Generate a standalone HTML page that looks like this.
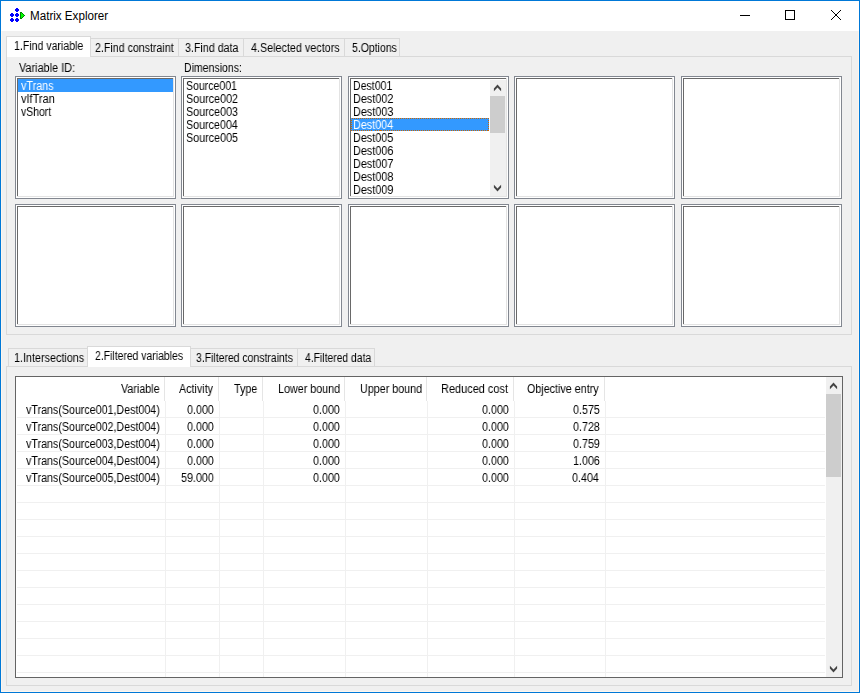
<!DOCTYPE html>
<html><head><meta charset="utf-8"><title>Matrix Explorer</title>
<style>
html,body{margin:0;padding:0;background:#f0f0f0;}
body{width:860px;height:693px;overflow:hidden;position:relative;font-family:"Liberation Sans",sans-serif;color:#000;}
#win{position:absolute;left:0;top:0;width:858px;height:691px;border:1px solid #0078d7;background:#f0f0f0;box-shadow:inset 0 0 0 1px #fdf6ee;}
#title{position:absolute;left:1px;top:1px;width:858px;height:30px;background:#fff;}
.abs{position:absolute;}
.t{position:absolute;white-space:nowrap;font-size:12px;line-height:14px;transform-origin:0 0;will-change:transform;}
.ttl{will-change:auto;text-shadow:none;}
.page{position:absolute;border:1px solid #d9d9d9;background:#f0f0f0;box-sizing:border-box;}
.tab{position:absolute;box-sizing:border-box;border:1px solid #d9d9d9;border-bottom:none;background:#f0f0f0;}
.tab.sel{background:#fff;}
.lb{position:absolute;box-sizing:border-box;width:161px;height:123px;border:1px solid #828790;background:#fff;}
.lb i{position:absolute;left:1px;top:1px;right:1px;bottom:1px;box-shadow:inset -1px -1px 0 #e3e3e3, inset 1px 1px 0 #696969;}
.hl{position:absolute;background:#3399ff;}
.vs{position:absolute;width:1px;background:#e5e5e5;}
.vg{position:absolute;width:1px;background:#f0f0f0;}
.hg{position:absolute;height:1px;background:#f0f0f0;}
</style></head><body>
<div id="win"></div>
<div id="title"></div>

<svg class="abs" style="left:9px;top:7px" width="17" height="16" viewBox="9 7 17 16">
<g fill="#0000ff" shape-rendering="crispEdges"><rect x="16" y="8" width="2" height="4"/><rect x="15" y="9" width="4" height="2"/><rect x="11" y="13" width="2" height="4"/><rect x="10" y="14" width="4" height="2"/><rect x="16" y="13" width="2" height="4"/><rect x="15" y="14" width="4" height="2"/><rect x="11" y="18" width="2" height="4"/><rect x="10" y="19" width="4" height="2"/><rect x="16" y="18" width="2" height="4"/><rect x="15" y="19" width="4" height="2"/></g>
<g shape-rendering="crispEdges"><g fill="#008000"><rect x="20" y="12" width="1" height="7"/><rect x="21" y="12" width="1" height="1"/><rect x="22" y="13" width="1" height="1"/><rect x="23" y="14" width="1" height="1"/><rect x="24" y="15" width="1" height="1"/><rect x="23" y="16" width="1" height="1"/><rect x="22" y="17" width="1" height="1"/><rect x="21" y="18" width="1" height="1"/></g><g fill="#00ff00"><rect x="21" y="13" width="1" height="5"/><rect x="22" y="14" width="1" height="3"/><rect x="23" y="15" width="1" height="1"/></g></g>
</svg>
<span class="t ttl" style="left:30.03px;top:9px;transform:scaleX(0.9686);">Matrix Explorer</span>
<svg class="abs" style="left:735px;top:5px" width="115" height="20" viewBox="735 5 115 20">
<g stroke="#000" stroke-width="1" fill="none" shape-rendering="crispEdges">
<line x1="740" y1="15.5" x2="750" y2="15.5"/>
<rect x="785.5" y="10.5" width="9" height="9"/>
</g>
<g fill="#000" shape-rendering="crispEdges"><rect x="831" y="10" width="1" height="1"/><rect x="840" y="10" width="1" height="1"/><rect x="832" y="11" width="1" height="1"/><rect x="839" y="11" width="1" height="1"/><rect x="833" y="12" width="1" height="1"/><rect x="838" y="12" width="1" height="1"/><rect x="834" y="13" width="1" height="1"/><rect x="837" y="13" width="1" height="1"/><rect x="835" y="14" width="1" height="1"/><rect x="836" y="14" width="1" height="1"/><rect x="836" y="15" width="1" height="1"/><rect x="835" y="15" width="1" height="1"/><rect x="837" y="16" width="1" height="1"/><rect x="834" y="16" width="1" height="1"/><rect x="838" y="17" width="1" height="1"/><rect x="833" y="17" width="1" height="1"/><rect x="839" y="18" width="1" height="1"/><rect x="832" y="18" width="1" height="1"/><rect x="840" y="19" width="1" height="1"/><rect x="831" y="19" width="1" height="1"/></g></svg>
<div class="page" style="left:6px;top:56px;width:846px;height:279px;"></div>
<div class="tab" style="left:90px;top:38px;width:89px;height:18px;"></div>
<span class="t" style="left:95.45px;top:41px;transform:scaleX(0.8864);">2.Find constraint</span>
<div class="tab" style="left:178px;top:38px;width:66px;height:18px;"></div>
<span class="t" style="left:184.55px;top:41px;transform:scaleX(0.8908);">3.Find data</span>
<div class="tab" style="left:243px;top:38px;width:102px;height:18px;"></div>
<span class="t" style="left:250.78px;top:41px;transform:scaleX(0.8980);">4.Selected vectors</span>
<div class="tab" style="left:344px;top:38px;width:56px;height:18px;"></div>
<span class="t" style="left:351.56px;top:41px;transform:scaleX(0.8734);">5.Options</span>
<div class="tab sel" style="left:6px;top:36px;width:85px;height:21px;"></div>
<span class="t" style="left:14.23px;top:39px;transform:scaleX(0.8803);">1.Find variable</span>
<span class="t" style="left:18.89px;top:61px;transform:scaleX(0.9072);">Variable ID:</span>
<span class="t" style="left:184.12px;top:61px;transform:scaleX(0.8767);">Dimensions:</span>
<div class="lb" style="left:15px;top:76px;"><i></i></div>
<div class="lb" style="left:181px;top:76px;"><i></i></div>
<div class="lb" style="left:348px;top:76px;"><i></i></div>
<div class="lb" style="left:514px;top:76px;"><i></i></div>
<div class="lb" style="left:681px;top:76px;"><i></i></div>
<div class="lb" style="left:15px;top:204px;"><i></i></div>
<div class="lb" style="left:181px;top:204px;"><i></i></div>
<div class="lb" style="left:348px;top:204px;"><i></i></div>
<div class="lb" style="left:514px;top:204px;"><i></i></div>
<div class="lb" style="left:681px;top:204px;"><i></i></div>
<div class="hl" style="left:18px;top:79px;width:155px;height:13px;"></div>
<span class="t" style="left:20.89px;top:79px;transform:scaleX(0.8982);color:#fff;">vTrans</span>
<span class="t" style="left:20.89px;top:92px;transform:scaleX(0.9167);">vIfTran</span>
<span class="t" style="left:20.89px;top:105px;transform:scaleX(0.8696);">vShort</span>
<span class="t" style="left:186.45px;top:79px;transform:scaleX(0.8791);">Source001</span>
<span class="t" style="left:186.44px;top:92px;transform:scaleX(0.8967);">Source002</span>
<span class="t" style="left:186.44px;top:105px;transform:scaleX(0.8967);">Source003</span>
<span class="t" style="left:186.44px;top:118px;transform:scaleX(0.8928);">Source004</span>
<span class="t" style="left:186.44px;top:131px;transform:scaleX(0.8967);">Source005</span>
<div class="hl" style="left:351px;top:118px;width:138px;height:13px;"></div>
<svg class="abs" style="left:351px;top:118px" width="138" height="13"><rect x="0.5" y="0.5" width="137" height="12" fill="none" stroke="#cc6600" stroke-width="1" stroke-dasharray="1 1" shape-rendering="crispEdges"/></svg>
<span class="t" style="left:353.12px;top:79px;transform:scaleX(0.8812);">Dest001</span>
<span class="t" style="left:353.10px;top:92px;transform:scaleX(0.9043);">Dest002</span>
<span class="t" style="left:353.10px;top:105px;transform:scaleX(0.9043);">Dest003</span>
<span class="t" style="left:353.10px;top:118px;transform:scaleX(0.8991);color:#fff;">Dest004</span>
<span class="t" style="left:353.10px;top:131px;transform:scaleX(0.9017);">Dest005</span>
<span class="t" style="left:353.10px;top:144px;transform:scaleX(0.9043);">Dest006</span>
<span class="t" style="left:353.10px;top:157px;transform:scaleX(0.9043);">Dest007</span>
<span class="t" style="left:353.10px;top:170px;transform:scaleX(0.9043);">Dest008</span>
<span class="t" style="left:353.10px;top:183px;transform:scaleX(0.9043);">Dest009</span>
<div class="abs" style="left:490px;top:80px;width:16px;height:116px;background:#f0f0f0;"></div>
<div class="abs" style="left:490px;top:96px;width:15px;height:37px;background:#cdcdcd;"></div>
<svg class="abs" style="left:490px;top:80px" width="16" height="116" viewBox="490 80 16 116"><g fill="#444">
<path d="M497.5 84.6 L501.1 88.4 L501.1 91.3 L497.5 87.6 L493.9 91.3 L493.9 88.4 Z"/>
<path d="M497.5 191.4 L501.1 187.6 L501.1 184.7 L497.5 188.4 L493.9 184.7 L493.9 187.6 Z"/></g></svg>
<div class="page" style="left:6px;top:366px;width:846px;height:320px;"></div>
<div class="tab" style="left:8px;top:348px;width:81px;height:18px;"></div>
<span class="t" style="left:14.21px;top:351px;transform:scaleX(0.8990);">1.Intersections</span>
<div class="tab" style="left:190px;top:348px;width:108px;height:18px;"></div>
<span class="t" style="left:195.57px;top:351px;transform:scaleX(0.8698);">3.Filtered constraints</span>
<div class="tab" style="left:297px;top:348px;width:78px;height:18px;"></div>
<span class="t" style="left:304.78px;top:351px;transform:scaleX(0.8627);">4.Filtered data</span>
<div class="tab sel" style="left:87px;top:346px;width:104px;height:21px;"></div>
<span class="t" style="left:95.46px;top:349px;transform:scaleX(0.8678);">2.Filtered variables</span>
<div class="abs" style="left:15px;top:376px;width:828px;height:302px;box-sizing:border-box;border:1px solid #646464;background:#fff;"></div>
<div class="vs" style="left:164px;top:377px;height:24px;"></div>
<div class="vg" style="left:165px;top:401px;height:276px;"></div>
<div class="vs" style="left:218px;top:377px;height:24px;"></div>
<div class="vg" style="left:219px;top:401px;height:276px;"></div>
<div class="vs" style="left:262px;top:377px;height:24px;"></div>
<div class="vg" style="left:263px;top:401px;height:276px;"></div>
<div class="vs" style="left:344px;top:377px;height:24px;"></div>
<div class="vg" style="left:345px;top:401px;height:276px;"></div>
<div class="vs" style="left:426px;top:377px;height:24px;"></div>
<div class="vg" style="left:427px;top:401px;height:276px;"></div>
<div class="vs" style="left:513px;top:377px;height:24px;"></div>
<div class="vg" style="left:514px;top:401px;height:276px;"></div>
<div class="vs" style="left:604px;top:377px;height:24px;"></div>
<div class="vg" style="left:605px;top:401px;height:276px;"></div>
<div class="hg" style="left:17px;top:417px;width:808px;"></div>
<div class="hg" style="left:17px;top:434px;width:808px;"></div>
<div class="hg" style="left:17px;top:451px;width:808px;"></div>
<div class="hg" style="left:17px;top:468px;width:808px;"></div>
<div class="hg" style="left:17px;top:485px;width:808px;"></div>
<div class="hg" style="left:17px;top:502px;width:808px;"></div>
<div class="hg" style="left:17px;top:519px;width:808px;"></div>
<div class="hg" style="left:17px;top:536px;width:808px;"></div>
<div class="hg" style="left:17px;top:553px;width:808px;"></div>
<div class="hg" style="left:17px;top:570px;width:808px;"></div>
<div class="hg" style="left:17px;top:587px;width:808px;"></div>
<div class="hg" style="left:17px;top:604px;width:808px;"></div>
<div class="hg" style="left:17px;top:621px;width:808px;"></div>
<div class="hg" style="left:17px;top:638px;width:808px;"></div>
<div class="hg" style="left:17px;top:655px;width:808px;"></div>
<div class="hg" style="left:17px;top:672px;width:808px;"></div>
<span class="t" style="left:120.85px;top:382px;transform:scaleX(0.8950);">Variable</span>
<span class="t" style="left:179.10px;top:382px;transform:scaleX(0.8950);">Activity</span>
<span class="t" style="left:234.18px;top:382px;transform:scaleX(0.8950);">Type</span>
<span class="t" style="left:277.58px;top:382px;transform:scaleX(0.8950);">Lower bound</span>
<span class="t" style="left:359.58px;top:382px;transform:scaleX(0.8950);">Upper bound</span>
<span class="t" style="left:441.09px;top:382px;transform:scaleX(0.9135);">Reduced cost</span>
<span class="t" style="left:527.40px;top:382px;transform:scaleX(0.8950);">Objective entry</span>
<span class="t" style="left:25.89px;top:403px;transform:scaleX(0.8904);">vTrans(Source001,Dest004)</span>
<span class="t" style="left:186.60px;top:403px;transform:scaleX(0.8950);">0.000</span>
<span class="t" style="left:312.60px;top:403px;transform:scaleX(0.8950);">0.000</span>
<span class="t" style="left:481.60px;top:403px;transform:scaleX(0.8950);">0.000</span>
<span class="t" style="left:572.60px;top:403px;transform:scaleX(0.8950);">0.575</span>
<span class="t" style="left:25.89px;top:420px;transform:scaleX(0.8904);">vTrans(Source002,Dest004)</span>
<span class="t" style="left:186.60px;top:420px;transform:scaleX(0.8950);">0.000</span>
<span class="t" style="left:312.60px;top:420px;transform:scaleX(0.8950);">0.000</span>
<span class="t" style="left:481.60px;top:420px;transform:scaleX(0.8950);">0.000</span>
<span class="t" style="left:572.60px;top:420px;transform:scaleX(0.8950);">0.728</span>
<span class="t" style="left:25.89px;top:437px;transform:scaleX(0.8904);">vTrans(Source003,Dest004)</span>
<span class="t" style="left:186.60px;top:437px;transform:scaleX(0.8950);">0.000</span>
<span class="t" style="left:312.60px;top:437px;transform:scaleX(0.8950);">0.000</span>
<span class="t" style="left:481.60px;top:437px;transform:scaleX(0.8950);">0.000</span>
<span class="t" style="left:572.60px;top:437px;transform:scaleX(0.8950);">0.759</span>
<span class="t" style="left:25.89px;top:454px;transform:scaleX(0.8904);">vTrans(Source004,Dest004)</span>
<span class="t" style="left:186.60px;top:454px;transform:scaleX(0.8950);">0.000</span>
<span class="t" style="left:312.60px;top:454px;transform:scaleX(0.8950);">0.000</span>
<span class="t" style="left:481.60px;top:454px;transform:scaleX(0.8950);">0.000</span>
<span class="t" style="left:572.60px;top:454px;transform:scaleX(0.8950);">1.006</span>
<span class="t" style="left:25.89px;top:471px;transform:scaleX(0.8904);">vTrans(Source005,Dest004)</span>
<span class="t" style="left:180.56px;top:471px;transform:scaleX(0.8950);">59.000</span>
<span class="t" style="left:312.60px;top:471px;transform:scaleX(0.8950);">0.000</span>
<span class="t" style="left:481.60px;top:471px;transform:scaleX(0.8950);">0.000</span>
<span class="t" style="left:572.49px;top:471px;transform:scaleX(0.8950);">0.404</span>
<div class="abs" style="left:826px;top:377px;width:16px;height:300px;background:#f0f0f0;"></div>
<div class="abs" style="left:826px;top:394px;width:15px;height:83px;background:#cdcdcd;"></div>
<svg class="abs" style="left:826px;top:377px" width="16" height="300" viewBox="826 377 16 300"><g fill="#444">
<path d="M833.5 382.6 L837.1 386.4 L837.1 389.3 L833.5 385.6 L829.9 389.3 L829.9 386.4 Z"/>
<path d="M833.5 672.4 L837.1 668.6 L837.1 665.7 L833.5 669.4 L829.9 665.7 L829.9 668.6 Z"/></g></svg>
</body></html>
